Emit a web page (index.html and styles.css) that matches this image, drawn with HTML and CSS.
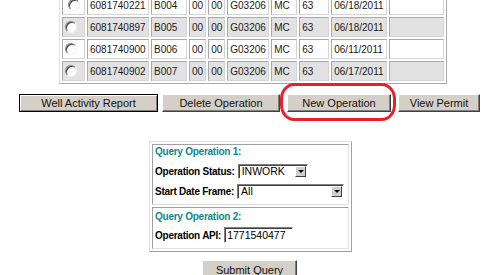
FILE: index.html
```html
<!DOCTYPE html>
<html lang="en">

<head>
	<meta charset="UTF-8">
	<title>Operations</title>
	<link rel="stylesheet" href="styles.css">
</head>

<body>
	<table class="ops">
		<tr class="light">
			<td class="c-pick"><span class="radio"></span></td>
			<td class="c-api">6081740221</td>
			<td class="c-b">B004</td>
			<td class="c-n">00</td>
			<td class="c-n">00</td>
			<td class="c-g">G03206</td>
			<td class="c-mc">MC</td>
			<td class="c-63">63</td>
			<td class="c-date">06/18/2011</td>
			<td class="c-end"></td>
		</tr>
		<tr class="dark">
			<td><span class="radio"></span></td>
			<td>6081740897</td>
			<td>B005</td>
			<td>00</td>
			<td>00</td>
			<td>G03206</td>
			<td>MC</td>
			<td>63</td>
			<td>06/18/2011</td>
			<td></td>
		</tr>
		<tr class="light">
			<td><span class="radio"></span></td>
			<td>6081740900</td>
			<td>B006</td>
			<td>00</td>
			<td>00</td>
			<td>G03206</td>
			<td>MC</td>
			<td>63</td>
			<td>06/11/2011</td>
			<td></td>
		</tr>
		<tr class="dark">
			<td><span class="radio"></span></td>
			<td>6081740902</td>
			<td>B007</td>
			<td>00</td>
			<td>00</td>
			<td>G03206</td>
			<td>MC</td>
			<td>63</td>
			<td>06/17/2011</td>
			<td></td>
		</tr>
	</table>

	<div class="actions">
		<button class="btn btn-default b-report">Well Activity Report</button>
		<button class="btn b-delete">Delete Operation</button>
		<button class="btn b-new">New Operation</button>
		<button class="btn b-view">View Permit</button>
		<!-- red annotation round the button -->
		<span class="mark"></span>
	</div>

	<div class="query">
		<div class="section">
			<div class="title">Query Operation 1:</div>
			<div class="field">
				<span class="label">Operation Status:</span>
				<span class="select s-status"><span class="value">INWORK</span><span class="arrow"></span></span>
			</div>
			<div class="field">
				<span class="label">Start Date Frame:</span>
				<span class="select s-date"><span class="value">All</span><span class="arrow"></span></span>
			</div>
		</div>
		<div class="section">
			<div class="title">Query Operation 2:</div>
			<div class="field">
				<span class="label">Operation API:</span>
				<span class="text-input">1771540477</span>
			</div>
		</div>
	</div>

	<div class="submit-row">
		<button class="btn b-submit">Submit Query</button>
	</div>
</body>

</html>
```

FILE: styles.css
```css
* {
	box-sizing: border-box;
}

html,
body {
	margin: 0;
	padding: 0;
	background: #fff;
	overflow: hidden;
}

body {
	width: 488px;
	height: 275px;
	font-family: "Liberation Sans", Arial, sans-serif;
	color: #000;
}

/* operations table */
.ops {
	margin: -8px 0 0 59px;
	border-collapse: separate;
	border-spacing: 2px;
	border: 1px solid;
	border-color: #e0e0e0 #a8a8a8 #a8a8a8 #e0e0e0;
	font-size: 10px;
	color: #1a1a1a;
}

.ops td {
	height: 20px;
	padding: 0 2px;
	border: 1px solid;
	border-color: #a8a8a8 #d4d4d4 #d4d4d4 #a8a8a8;
	vertical-align: middle;
	white-space: nowrap;
}

.light td {
	background: #fff;
}

.dark td {
	background: #e2e2e2;
}

.c-pick { width: 23px; text-align: center; }
.c-api { width: 62px; }
.c-b { width: 36px; }
.c-n { width: 16px; }
.c-g { width: 42px; }
.c-mc { width: 26px; }
.c-63 { width: 30px; }
.c-date { width: 54px; }
.c-end { width: 55px; }

.radio {
	display: inline-block;
	width: 12px;
	height: 12px;
	border-radius: 50%;
	border: 1px solid;
	border-color: #808080 #f0f0f0 #f0f0f0 #808080;
	background: #fff;
	box-shadow: inset 1px 1px 0 #404040;
	vertical-align: middle;
}

/* buttons */
.actions {
	position: relative;
	display: flex;
	margin: 10px 0 0 19px;
	height: 18px;
}

.btn {
	height: 18px;
	padding: 0;
	font-family: "Liberation Sans", Arial, sans-serif;
	font-size: 11px;
	color: #111;
	background: #d4d0c8;
	border: 1px solid;
	border-color: #fff #404040 #404040 #fff;
	box-shadow: inset -1px -1px 0 #808080;
}

.btn-default {
	border-color: #000;
	box-shadow: inset 1px 1px 0 #fff, inset -1px -1px 0 #808080;
}

.b-report { width: 139px; }
.b-delete { width: 118px; margin-left: 4px; }
.b-new { width: 104px; margin-left: 7px; }
.b-view { width: 82px; margin-left: 7px; }

.mark {
	position: absolute;
	left: 261px;
	top: -11px;
	width: 116px;
	height: 38px;
	border: 3px solid #e8202a;
	border-radius: 14px / 16px;
}

/* query box */
.query {
	width: 203px;
	margin: 29px 0 0 149px;
	padding: 2px;
	border: 1px solid;
	border-color: #e0e0e0 #a0a0a0 #a0a0a0 #e0e0e0;
	font-size: 10px;
	letter-spacing: -0.25px;
	font-weight: bold;
}

.section {
	padding: 2px 2px 3px;
	border: 1px solid;
	border-color: #a0a0a0 #e0e0e0 #e0e0e0 #a0a0a0;
}

.section + .section {
	margin-top: 2px;
}

.title {
	color: #0a8a8a;
	line-height: 10px;
	margin-bottom: 4px;
}

.section + .section .title {
	margin-top: 2px;
	margin-bottom: 3px;
}

.field {
	display: flex;
	align-items: center;
	gap: 3px;
	height: 20px;
	white-space: nowrap;
}

.select,
.text-input {
	display: flex;
	align-items: center;
	height: 15px;
	background: #fff;
	border: 1px solid;
	border-color: #808080 #fff #fff #808080;
	box-shadow: inset 1px 1px 0 #404040;
	font-weight: normal;
	font-size: 10.5px;
	letter-spacing: 0;
}

.value {
	flex: 1;
	padding-left: 3px;
}

.s-status { width: 70px; }
.s-date { width: 107px; }

.arrow {
	position: relative;
	width: 11px;
	height: 11px;
	margin-right: 1px;
	background: #d4d0c8;
	border: 1px solid;
	border-color: #fff #404040 #404040 #fff;
}

.arrow::after {
	content: "";
	position: absolute;
	left: 2px;
	top: 3px;
	border-left: 3px solid transparent;
	border-right: 3px solid transparent;
	border-top: 3px solid #000;
}

.text-input {
	width: 69px;
	height: 16px;
	padding-left: 2px;
}

.submit-row {
	margin: 8px 0 0 202px;
}

.b-submit {
	width: 95px;
	height: 20px;
}
```
